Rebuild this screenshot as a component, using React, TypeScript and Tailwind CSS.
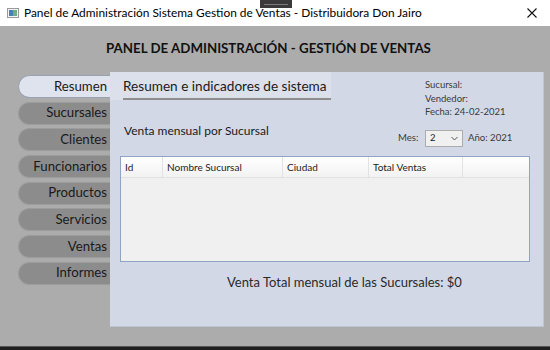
const font = { fontFamily: 'Lato, "Noto Sans", sans-serif' }

const tabs = ['Resumen', 'Sucursales', 'Clientes', 'Funcionarios', 'Productos', 'Servicios', 'Ventas', 'Informes']

const columns = [
  { name: 'Id', w: 'w-[42px]' },
  { name: 'Nombre Sucursal', w: 'w-[120px]' },
  { name: 'Ciudad', w: 'w-[86px]' },
  { name: 'Total Ventas', w: 'w-[94px]' },
  { name: '', w: 'flex-1' },
]

const App = () => {
  return (
    <div className="relative w-[550px] h-[350px] overflow-hidden flex flex-col bg-[#acacac] text-[#1a1a1a]" style={font}>
      {/* title bar */}
      <div className="h-[26px] bg-white flex items-center px-[7px] shrink-0">
        <svg width="12" height="10" viewBox="0 0 12 10" className="shrink-0">
          <rect x="0.5" y="0.5" width="11" height="9" fill="#f4f4f4" stroke="#9a9a9a" />
          <rect x="2" y="2" width="4" height="6" fill="#4a7fb8" />
          <rect x="6" y="2" width="4" height="6" fill="#6fb07a" />
        </svg>
        <span className="ml-[5px] text-[11.9px] text-black whitespace-nowrap">
          Panel de Administración Sistema Gestion de Ventas - Distribuidora Don Jairo
        </span>
        <svg width="10" height="10" viewBox="0 0 10 10" className="ml-auto mr-[6px]">
          <path d="M0.5 0.5 L9.5 9.5 M9.5 0.5 L0.5 9.5" stroke="#111" strokeWidth="1.1" />
        </svg>
      </div>
      <div className="absolute left-[260px] top-0 w-[32px] h-[8px] bg-[#3a3a3a] flex items-center justify-center">
        <div className="w-[24px] h-[1px] bg-[#7a7a7a]" />
      </div>

      {/* header */}
      <div className="h-[46px] flex items-center justify-center pr-[13px] text-[13.3px] font-bold whitespace-nowrap text-[#111]">
        PANEL DE ADMINISTRACIÓN - GESTIÓN DE VENTAS
      </div>

      <div className="flex h-[255px]">
        {/* nav */}
        <div className="w-[110px] pl-[18px] pt-[3px] flex flex-col gap-[3.7px]">
          {tabs.map((t, i) => (
            <div
              key={t}
              className={
                i === 0
                  ? 'h-[23px] rounded-l-full bg-[#dfe3ee] border border-r-0 border-[#9aa2b2] flex items-center justify-end pr-[3px] text-[13.2px] text-[#1a1a1a]'
                  : 'h-[23px] rounded-l-full bg-[#8c8c8c] border border-r-0 border-[#9c9c9c] flex items-center justify-end pr-[3px] text-[13.2px] text-[#1a1a1a]'
              }
            >
              {t}
            </div>
          ))}
        </div>

        {/* panel */}
        <div className="w-[434px] bg-[#d3d8e6] border-r border-b border-[#c0c5d2] flex flex-col">
          <div className="h-[50px] flex">
            <div className="w-[221px] h-[28px] bg-[#dce0eb] pl-[13px]">
              <div className="h-[28px] border-b-2 border-[#8e8e8e] flex items-center whitespace-nowrap text-[13.6px] text-[#1a1a1a] pt-[2px]">
                Resumen e indicadores de sistema
              </div>
            </div>
            <div className="ml-[94px] pt-[6px] flex flex-col text-[9.5px] leading-[13.5px] text-[#3a3a3a]">
              <span>Sucursal:</span>
              <span>Vendedor:</span>
              <span>Fecha: 24-02-2021</span>
            </div>
          </div>

          <div className="h-[30px] flex">
            <div className="w-[288px] pl-[14px] pt-[1px] text-[12px] leading-[16px] text-[#1a1a1a]">
              Venta mensual por Sucursal
            </div>
            <div className="flex items-center h-[17px] mt-[8px] text-[9.6px] text-[#3a3a3a]">
              <span className="w-[27px]">Mes:</span>
              <div className="w-[38px] h-[17px] bg-[#f0f0f0] border border-[#acacac] flex items-center justify-between px-[4px]">
                <span className="text-[9.5px] text-[#222]">2</span>
                <svg width="7" height="5" viewBox="0 0 7 5">
                  <path d="M0.5 1 L3.5 4 L6.5 1" fill="none" stroke="#555" strokeWidth="1" />
                </svg>
              </div>
              <span className="ml-[5px]">Año: 2021</span>
            </div>
          </div>

          {/* table */}
          <div className="ml-[10px] mr-[13px] mt-[4px] h-[106px] border border-[#8fa3c2] bg-[#f0f0f0] flex flex-col">
            <div className="h-[21px] flex bg-gradient-to-b from-white to-[#f2f2f2] border-b border-[#e2e2e2]">
              {columns.map((c, i) => (
                <div
                  key={i}
                  className={`${c.w} h-full flex items-center pl-[4px] text-[10px] text-[#222] ${i < columns.length - 1 ? 'border-r border-[#e2e2e2]' : ''}`}
                >
                  {c.name}
                </div>
              ))}
            </div>
          </div>

          <div className="mt-[10px] pl-[117px] text-[13px] leading-[20px] text-[#2a2a2a]">
            Venta Total mensual de las Sucursales: $0
          </div>
        </div>
      </div>

      <div className="flex-1" />
      <div className="h-[4px] bg-[#1f1f1f] border-t border-[#555]" />
    </div>
  )
}

export default App
